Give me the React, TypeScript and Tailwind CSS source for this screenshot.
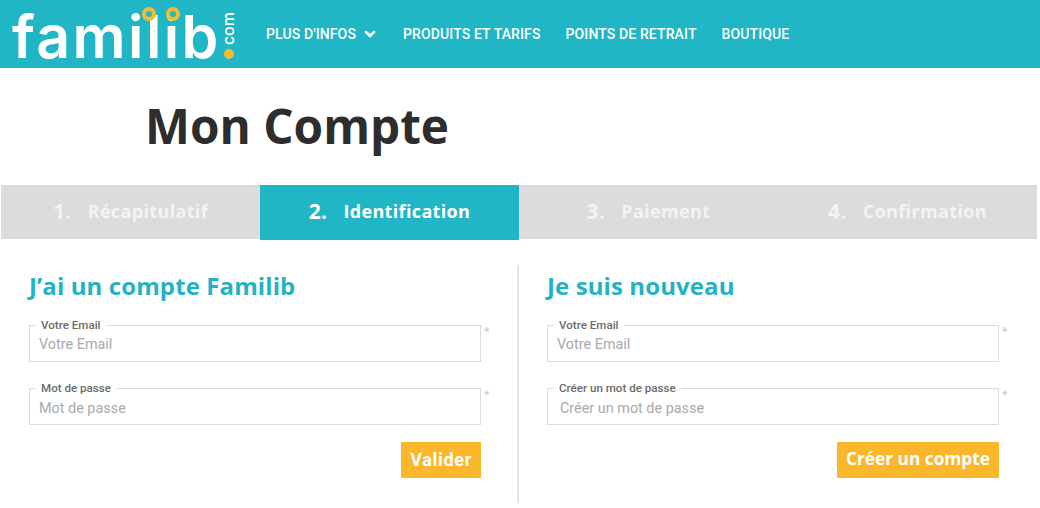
import React from 'react';
import { ChevronDown } from 'lucide-react';

const navItems = ['PRODUITS ET TARIFS', 'POINTS DE RETRAIT', 'BOUTIQUE'];

const steps = [
  { num: '1.', label: 'Récapitulatif', active: false },
  { num: '2.', label: 'Identification', active: true },
  { num: '3.', label: 'Paiement', active: false },
  { num: '4.', label: 'Confirmation', active: false },
];

const Logo: React.FC = () => (
  <div className="relative w-[254px] h-[68px] ml-[12px] shrink-0">
    <span className="absolute left-0 top-[4px] font-['Inter',sans-serif] font-semibold text-[59px] leading-[66px] tracking-[2.4px] text-white">
      familib
    </span>
    {/* yellow rings in place of the i dots */}
    <span className="absolute left-[130px] top-[7px] w-[14px] h-[14px] rounded-full border-[4px] border-[#f5bd2e] bg-[#20b6c5]"></span>
    <span className="absolute left-[154px] top-[7px] w-[14px] h-[14px] rounded-full border-[4px] border-[#f5bd2e] bg-[#20b6c5]"></span>
    <span className="absolute left-[207px] top-[12px] w-[18px] [writing-mode:vertical-rl] rotate-180 font-['Inter',sans-serif] font-medium text-[16px] leading-[18px] text-white">
      com
    </span>
    <span className="absolute left-[212px] top-[49px] w-[10px] h-[10px] rounded-full bg-[#f5bd2e]"></span>
  </div>
);

const Field: React.FC<{ label: string; placeholder: string; inset?: string; drop?: string }> = ({ label, placeholder, inset = 'pl-[9px]', drop = 'h-[26px]' }) => (
  <div className="flex">
    <fieldset className="w-[452px] h-[43px] border border-[#dcdcdc] px-0 min-w-0">
      <legend className="ml-[6px] px-[5px] text-[11.6px] leading-[12px] font-medium text-[#6b6b6b]">{label}</legend>
      <input
        readOnly
        placeholder={placeholder}
        className={`w-full ${drop} ${inset} text-[14.4px] outline-none placeholder:text-[#a9a9a9]`}
      />
    </fieldset>
    <span className="ml-[3px] mt-[5px] text-[13px] leading-[16px] text-[#ccc]">*</span>
  </div>
);

const FormColumn: React.FC<{
  title: string;
  pass: string;
  inset?: string;
  button: string;
  buttonFont: string;
  className: string;
}> = ({ title, pass, inset, button, buttonFont, className }) => (
  <div className={className}>
    <h2 className="pt-[5px] text-[24px] leading-[32px] tracking-[0.1px] font-bold text-[#25b2c2] font-['Open_Sans',sans-serif] mb-[17px]">{title}</h2>
    <Field label="Votre Email" placeholder="Votre Email" />
    <div className="mt-[20px]">
      <Field label={pass} placeholder={pass} inset={inset} drop="h-[28px]" />
    </div>
    <div className="w-[452px] flex justify-end mt-[17px]">
      <button className={`h-[36px] px-[9px] pb-[2px] bg-[#fbb72c] text-white font-bold ${buttonFont}`}>{button}</button>
    </div>
  </div>
);

const App: React.FC = () => {
  return (
    <div className="w-[1040px] h-[508px] bg-white overflow-hidden font-['Roboto',sans-serif]">
      <header className="h-[68px] bg-[#20b6c5] flex items-center">
        <Logo />
        <nav className="flex items-center text-white text-[14px] tracking-[0.12px] font-medium">
          <span className="flex items-center">
            PLUS D'INFOS
            <ChevronDown className="w-[16px] h-[16px] ml-[6px]" strokeWidth={4} />
          </span>
          {navItems.map((item) => (
            <a key={item} className="ml-[25px]">{item}</a>
          ))}
        </nav>
      </header>

      <h1 className="pl-[145px] pt-[27px] h-[117px] text-[47.7px] leading-[62px] font-bold text-[#2d2d2d] font-['Open_Sans',sans-serif]">
        Mon Compte
      </h1>

      <div className="ml-[1px] w-[1036px] h-[54px] bg-[#dcdcdc] grid grid-cols-4 font-['Open_Sans',sans-serif]">
        {steps.map((s) => (
          <div
            key={s.num}
            className={`flex items-center justify-center gap-[16px] pb-[2px] text-[18px] tracking-[0.35px] font-bold h-[55px] ${s.active ? 'bg-[#20b6c5] text-white' : 'text-[#f3f3f3]'}`}
          >
            <span className="text-[21px]">{s.num}</span>
            <span>{s.label}</span>
          </div>
        ))}
      </div>

      <div className="flex mt-[26px]">
        <FormColumn
          title="J’ai un compte Familib"
          pass="Mot de passe"
          button="Valider"
          buttonFont="font-['Roboto',sans-serif] text-[18px] tracking-[0.7px]"
          className="w-[519px] h-[238px] pl-[29px] border-r-2 border-[#e4e4e4]"
        />
        <FormColumn
          title="Je suis nouveau"
          pass="Créer un mot de passe"
          inset="pl-[12px]"
          button="Créer un compte"
          buttonFont="font-['Open_Sans',sans-serif] text-[17.3px]"
          className="pl-[28px]"
        />
      </div>
    </div>
  );
};

export default App;
